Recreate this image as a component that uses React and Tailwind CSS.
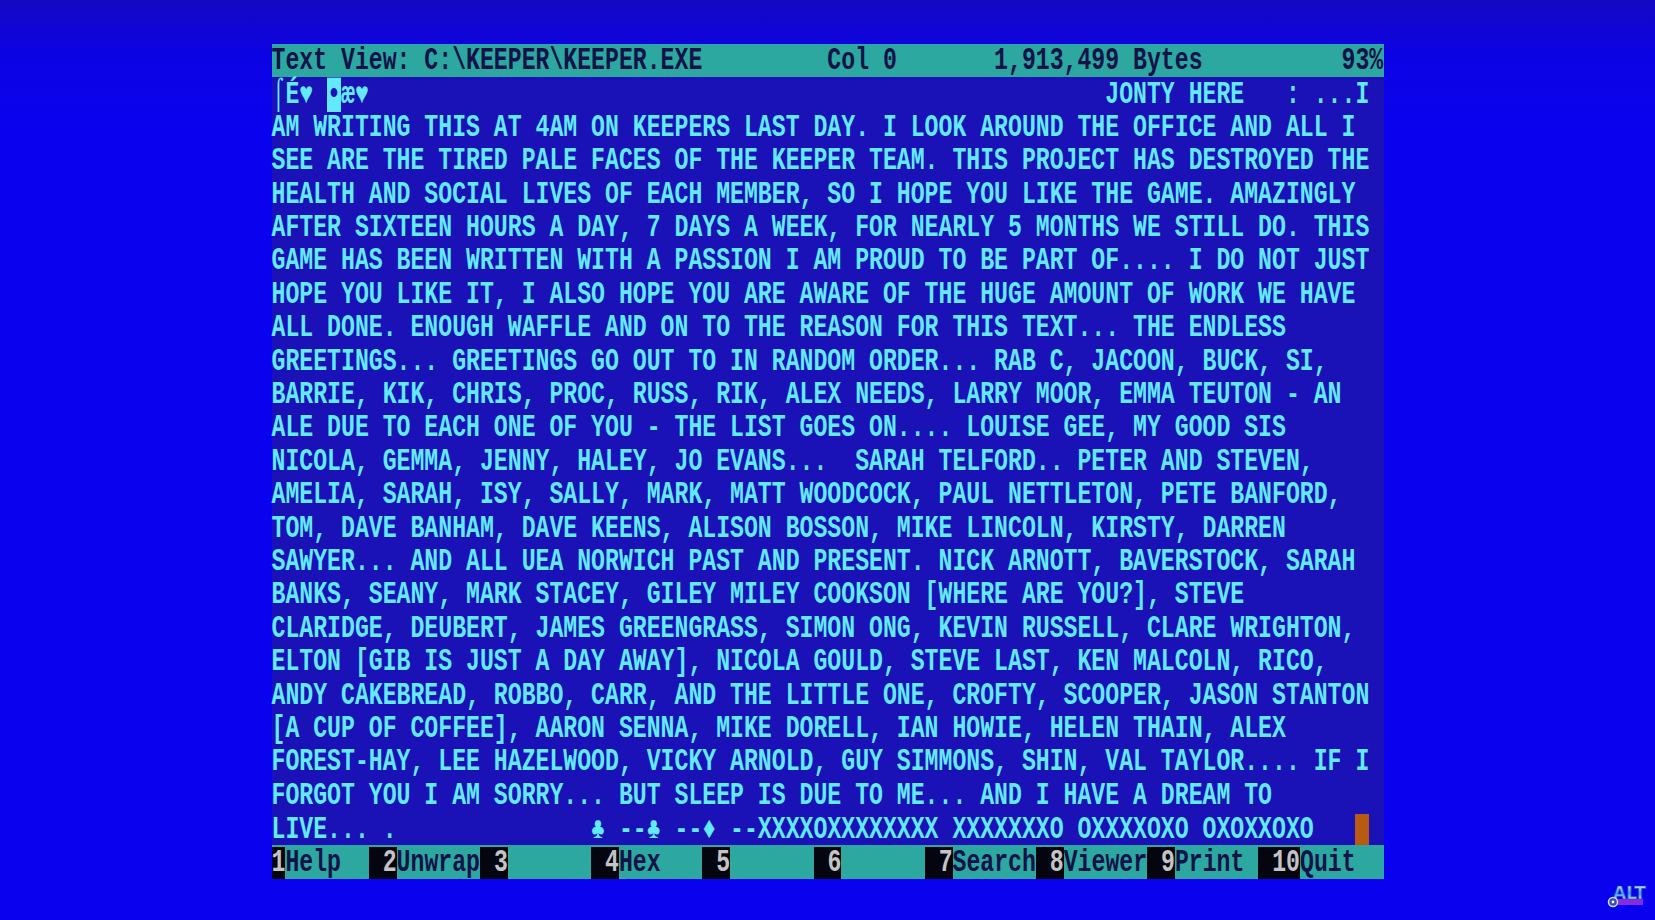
import React from 'react';

const pad = (s, col) => s + ' '.repeat(Math.max(0, col - s.length));

const header =
  pad(pad(pad('Text View: C:\\KEEPER\\KEEPER.EXE', 40) + 'Col 0', 52) + '1,913,499 Bytes', 77) + '93%';

const body = [
  'AM WRITING THIS AT 4AM ON KEEPERS LAST DAY. I LOOK AROUND THE OFFICE AND ALL I',
  'SEE ARE THE TIRED PALE FACES OF THE KEEPER TEAM. THIS PROJECT HAS DESTROYED THE',
  'HEALTH AND SOCIAL LIVES OF EACH MEMBER, SO I HOPE YOU LIKE THE GAME. AMAZINGLY',
  'AFTER SIXTEEN HOURS A DAY, 7 DAYS A WEEK, FOR NEARLY 5 MONTHS WE STILL DO. THIS',
  'GAME HAS BEEN WRITTEN WITH A PASSION I AM PROUD TO BE PART OF.... I DO NOT JUST',
  'HOPE YOU LIKE IT, I ALSO HOPE YOU ARE AWARE OF THE HUGE AMOUNT OF WORK WE HAVE',
  'ALL DONE. ENOUGH WAFFLE AND ON TO THE REASON FOR THIS TEXT... THE ENDLESS',
  'GREETINGS... GREETINGS GO OUT TO IN RANDOM ORDER... RAB C, JACOON, BUCK, SI,',
  'BARRIE, KIK, CHRIS, PROC, RUSS, RIK, ALEX NEEDS, LARRY MOOR, EMMA TEUTON - AN',
  'ALE DUE TO EACH ONE OF YOU - THE LIST GOES ON.... LOUISE GEE, MY GOOD SIS',
  'NICOLA, GEMMA, JENNY, HALEY, JO EVANS...  SARAH TELFORD.. PETER AND STEVEN,',
  'AMELIA, SARAH, ISY, SALLY, MARK, MATT WOODCOCK, PAUL NETTLETON, PETE BANFORD,',
  'TOM, DAVE BANHAM, DAVE KEENS, ALISON BOSSON, MIKE LINCOLN, KIRSTY, DARREN',
  'SAWYER... AND ALL UEA NORWICH PAST AND PRESENT. NICK ARNOTT, BAVERSTOCK, SARAH',
  'BANKS, SEANY, MARK STACEY, GILEY MILEY COOKSON [WHERE ARE YOU?], STEVE',
  'CLARIDGE, DEUBERT, JAMES GREENGRASS, SIMON ONG, KEVIN RUSSELL, CLARE WRIGHTON,',
  'ELTON [GIB IS JUST A DAY AWAY], NICOLA GOULD, STEVE LAST, KEN MALCOLN, RICO,',
  'ANDY CAKEBREAD, ROBBO, CARR, AND THE LITTLE ONE, CROFTY, SCOOPER, JASON STANTON',
  '[A CUP OF COFFEE], AARON SENNA, MIKE DORELL, IAN HOWIE, HELEN THAIN, ALEX',
  'FOREST-HAY, LEE HAZELWOOD, VICKY ARNOLD, GUY SIMMONS, SHIN, VAL TAYLOR.... IF I',
  'FORGOT YOU I AM SORRY... BUT SLEEP IS DUE TO ME... AND I HAVE A DREAM TO',
];

const lastLine = pad(pad('LIVE... .', 23) + '♣ --♣ --♦ --XXXXOXXXXXXXX XXXXXXXO OXXXXOXO OXOXXOXO', 78);

const keys = [
  ['1', 'Help  '],
  [' 2', 'Unwrap'],
  [' 3', '      '],
  [' 4', 'Hex   '],
  [' 5', '      '],
  [' 6', '      '],
  [' 7', 'Search'],
  [' 8', 'Viewer'],
  [' 9', 'Print '],
  [' 10', 'Quit  '],
];

// glyphs are stretched tall like the 80x25 text mode
const Glyphs = ({ children, className = '' }) => (
  <span className={`inline-block whitespace-pre leading-none scale-y-[1.32] ${className}`}>{children}</span>
);

const Row = ({ children, className = '' }) => (
  <div className={`flex h-[33.4px] items-center pt-[2px] ${className}`}>{children}</div>
);

const AltLogo = () => (
  <div className="absolute left-[1604px] top-[878px] h-[30px] w-[44px]">
    <svg width="44" height="30" viewBox="0 0 44 30">
      <defs>
        <linearGradient id="altg" x1="0" y1="0" x2="0" y2="1">
          <stop offset="0" stopColor="#eaf6ff" />
          <stop offset="0.5" stopColor="#3c9cff" />
          <stop offset="1" stopColor="#d8f0ff" />
        </linearGradient>
      </defs>
      <rect x="13" y="21" width="26" height="6" fill="#8a2ae0" />
      <text x="9" y="21" fontFamily="'DejaVu Sans', sans-serif" fontWeight="bold" fontSize="17" fill="url(#altg)" stroke="#1a3aa0" strokeWidth="0.6">ALT</text>
      <circle cx="9" cy="24" r="4.5" fill="#3a4ab0" stroke="#c8d8ff" strokeWidth="1.5" />
      <circle cx="9" cy="24" r="1.4" fill="#ffffff" />
    </svg>
  </div>
);

export default function App() {
  return (
    <div className="relative flex h-[920px] w-full justify-center overflow-hidden bg-[linear-gradient(180deg,#1408c2_0%,#0c03e4_6%,#0a02ee_14%,#0a02ee_100%)] pt-[44px] font-['Liberation_Mono','DejaVu_Sans_Mono',monospace] text-[23.17px] font-bold">
      <div className="flex h-[835px] w-[1112px] flex-col bg-[#1a12b6] text-[#62eafc]">
        <Row className="bg-[#2ca8a0] text-[#14124a]">
          <Glyphs>{header}</Glyphs>
        </Row>
        <Row>
          <Glyphs>
            {'⌠É♥ '}
            <span className="bg-[#62eafc] text-[#1a12b6]">•</span>
            {pad('æ♥', 55) + 'JONTY HERE   : ...I'}
          </Glyphs>
        </Row>
        {body.map((line, i) => (
          <Row key={i}>
            <Glyphs>{line}</Glyphs>
          </Row>
        ))}
        <Row className="items-stretch pt-0">
          <div className="flex items-center pt-[2px]">
            <Glyphs>{lastLine}</Glyphs>
          </div>
          <div className="w-[13.9px] bg-[#b85a12]" />
        </Row>
        <Row className="items-stretch bg-[#2ca8a0] pt-0">
          {keys.map(([num, label]) => (
            <React.Fragment key={num}>
              <div className="flex items-center bg-[#050510] pt-[2px] text-[#c4c4c4]">
                <Glyphs>{num}</Glyphs>
              </div>
              <div className="flex items-center bg-[#2ca8a0] pt-[2px] text-[#14124a]">
                <Glyphs>{label}</Glyphs>
              </div>
            </React.Fragment>
          ))}
        </Row>
      </div>
      <AltLogo />
    </div>
  );
}
